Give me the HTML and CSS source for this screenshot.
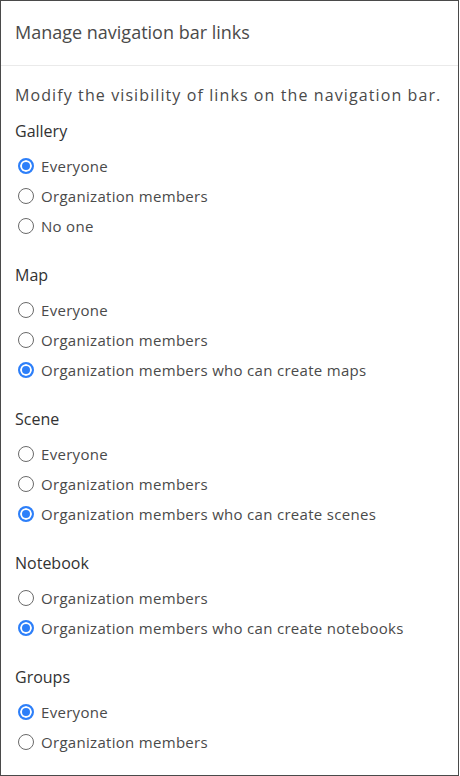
FILE: index.html
```html
<!DOCTYPE html>
<html>
<head>
<meta charset="utf-8">
<link rel="stylesheet" href="styles.css">
</head>
<body>
<div class="panel">
  <div class="header">Manage navigation bar links</div>
  <div class="content">
    <p class="desc">Modify the visibility of links on the navigation bar.</p>
    <div class="group">
      <div class="label">Gallery</div>
      <div class="opt"><span class="radio on"></span>Everyone</div>
      <div class="opt"><span class="radio"></span>Organization members</div>
      <div class="opt"><span class="radio"></span>No one</div>
    </div>
    <div class="group">
      <div class="label">Map</div>
      <div class="opt"><span class="radio"></span>Everyone</div>
      <div class="opt"><span class="radio"></span>Organization members</div>
      <div class="opt"><span class="radio on"></span>Organization members who can create maps</div>
    </div>
    <div class="group">
      <div class="label">Scene</div>
      <div class="opt"><span class="radio"></span>Everyone</div>
      <div class="opt"><span class="radio"></span>Organization members</div>
      <div class="opt"><span class="radio on"></span>Organization members who can create scenes</div>
    </div>
    <div class="group">
      <div class="label">Notebook</div>
      <div class="opt"><span class="radio"></span>Organization members</div>
      <div class="opt"><span class="radio on"></span>Organization members who can create notebooks</div>
    </div>
    <div class="group">
      <div class="label">Groups</div>
      <div class="opt"><span class="radio on"></span>Everyone</div>
      <div class="opt"><span class="radio"></span>Organization members</div>
    </div>
  </div>
</div>
</body>
</html>
```
FILE: styles.css
```css
html, body { margin: 0; padding: 0; background: #fff; }
body { font-family: "Open Sans", "Noto Sans", sans-serif; color: #4a4a4a; }
.panel {
  width: 459px;
  height: 776px;
  box-sizing: border-box;
  border: 1px solid #4a4a4a;
  overflow: hidden;
}
.header {
  height: 65px;
  box-sizing: border-box;
  border-bottom: 1px solid #eaeaea;
  padding: 19px 14px 0;
  font-size: 18px;
  line-height: 24px;
  color: #4a4a4a;
}
.content { padding: 18px 14px 0; }
.desc { margin: 0; font-size: 16px; line-height: 22px; letter-spacing: 1.1px; }
.group { margin-top: 14px; }
.group + .group { margin-top: 23px; }
.label { font-size: 16px; line-height: 22px; font-weight: 500; color: #323232; margin-bottom: 9px; }
.opt { display: flex; align-items: center; height: 30px; font-size: 15px; letter-spacing: 0.3px; }
.radio {
  width: 16px; height: 16px; box-sizing: border-box;
  border: 1px solid #6a6a6a; border-radius: 50%;
  margin: 0 7px 0 3px; flex: none; background: #fff;
}
.radio.on {
  border: 2px solid #2d7ff9;
  box-shadow: inset 0 0 0 2px #fff;
  background: #2d7ff9;
}
```
